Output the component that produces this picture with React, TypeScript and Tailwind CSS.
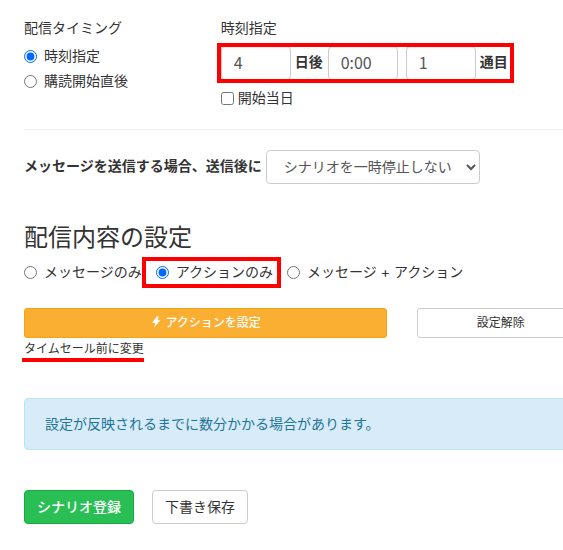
import React, { useState } from 'react';
import { clsx } from 'clsx';

interface Option {
  id: string;
  label: string;
}

const timings: Option[] = [
  { id: 'time', label: '時刻指定' },
  { id: 'immediate', label: '購読開始直後' },
];

const contents: Option[] = [
  { id: 'message', label: 'メッセージのみ' },
  { id: 'action', label: 'アクションのみ' },
  { id: 'both', label: 'メッセージ + アクション' },
];

const field =
  'h-[34px] w-[70px] rounded border border-[#ccc] bg-white px-3 pb-0.5 text-base text-[#555] shadow-[inset_0_1px_1px_rgba(0,0,0,0.075)] outline-none';

interface RadioProps {
  name: string;
  option: Option;
  checked: boolean;
  onSelect: (id: string) => void;
}

const Radio: React.FC<RadioProps> = ({ name, option, checked, onSelect }) => (
  <label className="flex items-center gap-[7px] font-['Inter','Noto_Sans_CJK_JP',sans-serif] leading-5 whitespace-nowrap">
    <input
      type="radio"
      name={name}
      checked={checked}
      onChange={() => onSelect(option.id)}
      className="size-[13px] accent-[#0067ff]"
    />
    {option.label}
  </label>
);

const BoltIcon = () => (
  <svg viewBox="0 0 12 12" className="size-3 fill-current" aria-hidden="true">
    <path d="M6.7.4h2.1L7.7 4.3h2.7L4 11.6l1.3-4.7H2z" />
  </svg>
);

export default function App() {
  const [timing, setTiming] = useState('time');
  const [content, setContent] = useState('action');

  return (
    <div className="overflow-hidden bg-white pt-[17px] pb-6 pl-6 font-['Noto_Sans_CJK_JP',sans-serif] text-sm leading-5 text-[#333]">
      {/* The form is wider than the viewport and runs off the right edge */}
      <div className="-mr-[21px]">
        <div className="-mx-[15px] flex">
          <fieldset className="w-1/3 px-[15px]">
            <legend className="mb-[9px]">配信タイミング</legend>
            <div className="space-y-[5px]">
              {timings.map(option => (
                <Radio
                  key={option.id}
                  name="timing"
                  option={option}
                  checked={timing === option.id}
                  onSelect={setTiming}
                />
              ))}
            </div>
          </fieldset>

          <div className="w-2/3 px-[15px]">
            <p className="mb-[9px]">時刻指定</p>
            <div className="relative flex w-fit font-bold whitespace-nowrap">
              <input id="days" aria-label="日数" defaultValue="4" className={clsx(field, 'font-normal')} />
              <label htmlFor="days" className="mr-[5px] ml-1 pt-[5px]">日後</label>
              <input aria-label="時刻" defaultValue="0:00" className={clsx(field, 'mr-2 font-normal')} />
              <input id="order" aria-label="通数" defaultValue="1" className={clsx(field, 'font-normal')} />
              <label htmlFor="order" className="ml-1 pt-[5px]">通目</label>
              <div className="pointer-events-none absolute -inset-y-[3px] -right-1.5 -left-1 border-4 border-[#f00]" />
            </div>
            <label className="mt-2 flex items-center gap-1 leading-[18px]">
              <input type="checkbox" className="size-[13px]" />
              <span className="pb-0.5">開始当日</span>
            </label>
          </div>
        </div>

        <hr className="mt-[21px] mb-5 border-[#eee]" />

        <div className="flex gap-1 whitespace-nowrap">
          <label htmlFor="pause" className="pt-[5px] font-bold">
            メッセージを送信する場合、送信後に
          </label>
          <select
            id="pause"
            className="h-[34px] w-[214px] rounded border border-[#ccc] bg-white pt-0 pr-0 pb-0.5 pl-[13px] text-sm text-[#555] outline-none"
          >
            <option>シナリオを一時停止しない</option>
            <option>シナリオを一時停止する</option>
          </select>
        </div>

        <h2 className="mt-[39px] mb-[13px] text-2xl leading-[26px]">配信内容の設定</h2>

        <div className="flex gap-[14px]">
          {contents.map(option => (
            <div key={option.id} className="relative">
              <Radio
                name="content"
                option={option}
                checked={content === option.id}
                onSelect={setContent}
              />
              {option.id === 'action' && (
                <div className="pointer-events-none absolute -top-[5px] -right-2 -bottom-[6px] -left-[14px] border-4 border-[#f00]" />
              )}
            </div>
          ))}
        </div>

        <div className="-mx-[15px] mt-[26px] flex text-xs">
          <div className="w-2/3 px-[15px]">
            <button
              type="button"
              className="flex h-[30px] w-full items-center justify-center gap-[3px] rounded-[3px] border border-[#f9a20b] bg-[#faae32] pb-0.5 font-medium text-white"
            >
              <BoltIcon />
              アクションを設定
            </button>
            <p className="relative w-fit leading-5">
              タイムセール前に変更
              <span className="absolute top-full right-0 -left-0.5 h-1 bg-[#f00]" />
            </p>
          </div>
          <div className="w-1/3 px-[15px]">
            <button type="button" className="h-[30px] w-full rounded-[3px] border border-[#ccc] bg-white pb-0.5">
              設定解除
            </button>
          </div>
        </div>

        <div className="mt-10 rounded border border-[#b3e8f2] bg-[#d7ebf8] px-5 pt-[14px] pb-4 text-[#1f7597]">
          設定が反映されるまでに数分かかる場合があります。
        </div>

        <div className="mt-10 flex gap-[18px]">
          <button
            type="submit"
            className="h-[34px] rounded border border-[#0fae3f] bg-[#2abf55] px-3 pb-0.5 font-medium text-white"
          >
            シナリオ登録
          </button>
          <button type="button" className="h-[34px] rounded border border-[#ccc] bg-white px-3 pb-0.5">
            下書き保存
          </button>
        </div>
      </div>
    </div>
  );
}
